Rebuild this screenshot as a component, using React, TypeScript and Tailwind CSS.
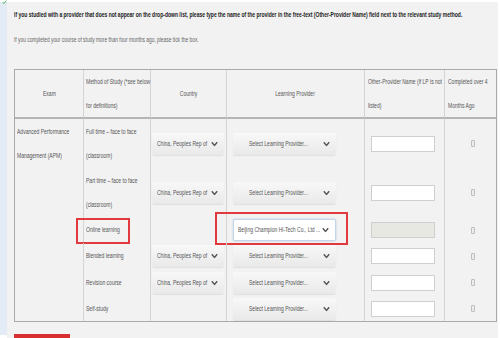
import React from 'react';

const font = "font-['Liberation_Sans',Arial,sans-serif]";

type Row = {
  h: string;
  exam?: string[];
  method: string[];
  country: boolean;
  provider?: string;
  highlight?: boolean;
};

const rows: Row[] = [
  { h: 'h-[49px]', exam: ['Advanced Performance', 'Management (APM)'], method: ['Full time – face to face', '(classroom)'], country: true },
  { h: 'h-[49px]', method: ['Part time – face to face', '(classroom)'], country: true },
  { h: 'h-[26px]', method: ['Online learning'], country: false, provider: 'Beijing Champion Hi-Tech Co., Ltd ...', highlight: true },
  { h: 'h-[26px]', method: ['Blended learning'], country: true },
  { h: 'h-[27px]', method: ['Revision course'], country: true },
  { h: 'h-[25px]', method: ['Self-study'], country: false },
];

// condensed text (the page uses a narrow face)
function T({ children, center }: { children: React.ReactNode; center?: boolean }) {
  return (
    <span
      className={`inline-block whitespace-nowrap scale-x-[0.76] ${center ? 'origin-center' : 'origin-left'}`}
    >
      {children}
    </span>
  );
}

function Chevron() {
  return (
    <svg width="7" height="5" viewBox="0 0 7 5" className="absolute right-[6px] top-1/2 -translate-y-1/2">
      <path d="M0.8 0.8 L3.5 4 L6.2 0.8" fill="none" stroke="#555" strokeWidth="1.4" />
    </svg>
  );
}

function SelectBox({ text, className }: { text: string; className: string }) {
  return (
    <div className={`relative h-[22px] flex items-center rounded-[2px] text-[6.6px] text-[#555] ${className}`}>
      <T>{text}</T>
      <Chevron />
    </div>
  );
}

const idle = 'bg-gradient-to-b from-[#f8f8f8] to-[#e9e9e9] shadow-[0_1px_1px_rgba(0,0,0,0.08)]';
const cols = 'grid grid-cols-[68px_67px_76px_138px_80px_52px]';

export default function App() {
  return (
    <div className={`w-[500px] h-[338px] bg-white overflow-hidden relative ${font}`}>
      {/* small tick at top-left */}
      <svg width="5" height="4" viewBox="0 0 5 4" className="absolute left-[2px] top-0">
        <path d="M0.5 2 L2 3.5 L4.5 0.5" fill="none" stroke="#5cb85c" strokeWidth="1" />
      </svg>

      <div className="flex h-full pt-[2px]">
        <div className="w-[7px] h-[333px] bg-[#e2ebf6]" />
        <div className="w-[491px] h-full bg-[#f2f2f2] pl-[7px]">
          <p className="text-[6.6px] font-bold text-[#222] leading-[8px] mt-[9px]">
            <T>
              If you studied with a provider that does not appear on the drop-down list, please type the name of the provider in the free-text (Other-Provider Name) field next to the relevant study method.
            </T>
          </p>
          <p className="text-[6.4px] text-[#666] leading-[8px] mt-[17px]">
            <T>If you completed your course of study more than four months ago, please tick the box.</T>
          </p>

          {/* table */}
          <div className="mt-[25px] w-[483px] border border-[#aaaaaa] text-[6.6px] text-[#555]">
            <div className={`${cols} h-[49px] border-b-2 border-[#b5b5b5]`}>
              <div className="flex items-center justify-center">
                <T center>Exam</T>
              </div>
              <div className="border-l border-[#d4d4d4] pl-[2px] flex flex-col justify-center leading-[24px]">
                <T>Method of Study (*see below</T>
                <T>for definitions)</T>
              </div>
              <div className="border-l border-[#d4d4d4] flex items-center justify-center">
                <T center>Country</T>
              </div>
              <div className="border-l border-[#d4d4d4] flex items-center justify-center">
                <T center>Learning Provider</T>
              </div>
              <div className="border-l border-[#d4d4d4] pl-[3px] flex flex-col justify-center leading-[24px]">
                <T>Other-Provider Name (if LP is not</T>
                <T>listed)</T>
              </div>
              <div className="border-l border-[#d4d4d4] pl-[3px] flex flex-col justify-center leading-[24px]">
                <T>Completed over 4</T>
                <T>Months Ago</T>
              </div>
            </div>

            {rows.map((r, i) => (
              <div key={i} className={`${cols} ${r.h}`}>
                <div className="pl-[2px] flex flex-col justify-center leading-[24px]">
                  {r.exam?.map((t) => <T key={t}>{t}</T>)}
                </div>
                <div className="border-l border-[#d4d4d4] pl-[2px] flex flex-col justify-center leading-[24px] relative">
                  {r.method.map((t) => <T key={t}>{t}</T>)}
                  {r.highlight && (
                    <div className="absolute left-[-8px] top-[1px] w-[54px] h-[26px] border-2 border-[#e0393e]" />
                  )}
                </div>
                <div className="border-l border-[#d4d4d4] flex items-center pl-[1px]">
                  {r.country && <SelectBox text="China, Peoples Rep of" className={`w-[72px] pl-[5px] ${idle}`} />}
                </div>
                <div className="border-l border-[#d4d4d4] flex items-center pl-[6px] relative">
                  {r.highlight ? (
                    <SelectBox
                      text={r.provider!}
                      className="w-[103px] pl-[4px] bg-white border border-[#c6d6ea] shadow-[0_0_2px_rgba(120,160,210,0.5)]"
                    />
                  ) : (
                    <SelectBox text="Select Learning Provider..." className={`w-[103px] pl-[16px] ${idle}`} />
                  )}
                  {r.highlight && (
                    <div className="absolute left-[-12px] top-[-5px] w-[133px] h-[33px] border-2 border-[#e0393e]" />
                  )}
                </div>
                <div className="border-l border-[#d4d4d4] flex items-center pl-[6px]">
                  <div
                    className={`w-[64px] h-[16px] border border-[#cfcfcf] ${r.highlight ? 'bg-[#e8e8e2]' : 'bg-white'}`}
                  />
                </div>
                <div className="border-l border-[#d4d4d4] flex items-center pl-[26px]">
                  <div className="w-[4px] h-[7px] rounded-[1px] border border-[#bdbdbd] bg-[#ececec]" />
                </div>
              </div>
            ))}
          </div>

          <div className="mt-[12px] w-[56px] h-[4px] bg-[#d9302f]" />
        </div>
      </div>
    </div>
  );
}
